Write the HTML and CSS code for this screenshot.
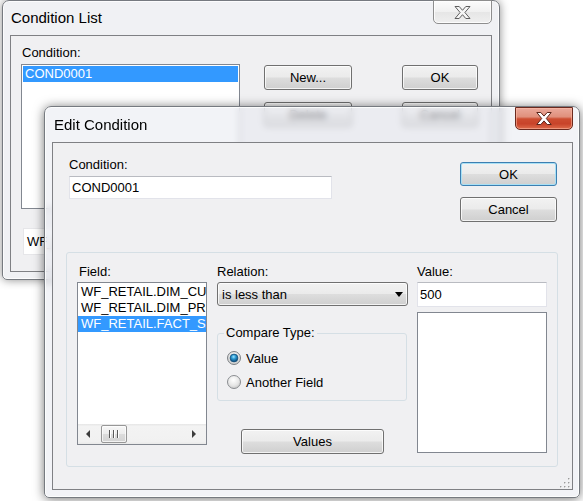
FILE: index.html
```html
<!DOCTYPE html>
<html>
<head>
<meta charset="utf-8">
<title>Edit Condition</title>
<link rel="stylesheet" href="styles.css">
</head>
<body>
<div class="desktop">

  <div class="window back">
    <div class="titlebar">
      <span class="title">Condition List</span>
      <div class="close close-inactive">
        <svg width="17" height="13" viewBox="0 0 17 13"><path d="M1 .5h4.2L8.5 4.3 11.8.5H16l-5.1 6 5.1 6h-4.2l-3.3-3.8-3.3 3.8H1l5.1-6z" fill="#f6f6f6" stroke="#5e5e5e" stroke-linejoin="round"/></svg>
      </div>
    </div>
    <div class="client back-client">
      <div class="back-left">
        <div class="label back-label">Condition:</div>
        <div class="listbox back-list">
          <div class="item selected">COND0001</div>
        </div>
        <div class="textbox back-wf">WF_RETAIL.FACT_SALES</div>
      </div>
      <div class="back-buttons">
        <div class="btn">New...</div>
        <div class="btn">OK</div>
        <div class="btn">Delete</div>
        <div class="btn">Cancel</div>
      </div>
    </div>
  </div>

  <div class="window front">
    <div class="titlebar">
      <span class="title">Edit Condition</span>
      <div class="close close-active">
        <svg width="16" height="13" viewBox="0 0 16 13"><path d="M.8 .5h4l3.2 3.6 3.2-3.6h4l-4.9 6 4.9 6h-4L8 8.9l-3.2 3.6h-4l4.9-6z" fill="#ffffff" stroke="#5a261b" stroke-linejoin="round"/></svg>
      </div>
    </div>
    <div class="client front-client">
      <div class="top-row">
        <div class="cond-col">
          <div class="label">Condition:</div>
          <div class="textbox cond-input">COND0001</div>
        </div>
        <div class="dlg-buttons">
          <div class="btn default ok">OK</div>
          <div class="btn cancel">Cancel</div>
        </div>
      </div>

      <div class="group">
        <div class="col">
          <div class="glabel field-label">Field:</div>
          <div class="listbox field-list">
            <div class="items">
              <div class="item">WF_RETAIL.DIM_CUSTOMER</div>
              <div class="item">WF_RETAIL.DIM_PRODUCT</div>
              <div class="item selected">WF_RETAIL.FACT_SALES</div>
            </div>
            <div class="hscroll">
              <div class="sb-btn sb-left"><span class="tri-left"></span></div>
              <div class="thumb"><span></span><span></span><span></span></div>
              <div class="sb-track"></div>
              <div class="sb-btn sb-right"><span class="tri-right"></span></div>
            </div>
          </div>
        </div>

        <div class="col mid-col">
          <div class="glabel">Relation:</div>
          <div class="combo"><span>is less than</span><span class="tri-down"></span></div>
          <fieldset class="ctype">
            <legend>Compare Type:</legend>
            <div class="radio">
              <svg width="14" height="14" viewBox="0 0 14 14">
                <defs>
                  <radialGradient id="ringOn" cx="50%" cy="35%" r="65%"><stop offset="0" stop-color="#ffffff"/><stop offset="1" stop-color="#c9c9c9"/></radialGradient>
                  <radialGradient id="dotOn" cx="45%" cy="35%" r="60%"><stop offset="0" stop-color="#9fe6ff"/><stop offset="0.45" stop-color="#2b9ad3"/><stop offset="1" stop-color="#0e4f7e"/></radialGradient>
                </defs>
                <circle cx="7" cy="7" r="6.5" fill="url(#ringOn)" stroke="#7d8185"/>
                <circle cx="7" cy="7" r="3.9" fill="url(#dotOn)" stroke="#14507c" stroke-width="0.8"/>
              </svg>
              <span>Value</span>
            </div>
            <div class="radio">
              <svg width="14" height="14" viewBox="0 0 14 14">
                <defs>
                  <radialGradient id="ringOff" cx="45%" cy="35%" r="70%"><stop offset="0" stop-color="#ffffff"/><stop offset="0.6" stop-color="#e6e6e6"/><stop offset="1" stop-color="#c4c4c4"/></radialGradient>
                </defs>
                <circle cx="7" cy="7" r="6.5" fill="url(#ringOff)" stroke="#8a8d91"/>
              </svg>
              <span>Another Field</span>
            </div>
          </fieldset>
          <div class="btn values">Values</div>
        </div>

        <div class="col">
          <div class="glabel">Value:</div>
          <div class="textbox value-input">500</div>
          <div class="listbox value-list"></div>
        </div>
      </div>

      <svg class="grip" width="12" height="12" viewBox="0 0 12 12">
        <g fill="#ffffff"><rect x="11" y="3" width="1" height="1"/><rect x="7" y="7" width="1" height="1"/><rect x="11" y="7" width="1" height="1"/><rect x="3" y="11" width="1" height="1"/><rect x="7" y="11" width="1" height="1"/><rect x="11" y="11" width="1" height="1"/></g>
        <g fill="#9a9a9a"><rect x="10" y="2" width="1.4" height="1.4"/><rect x="6" y="6" width="1.4" height="1.4"/><rect x="10" y="6" width="1.4" height="1.4"/><rect x="2" y="10" width="1.4" height="1.4"/><rect x="6" y="10" width="1.4" height="1.4"/><rect x="10" y="10" width="1.4" height="1.4"/></g>
      </svg>
    </div>
  </div>

</div>
</body>
</html>
```

FILE: styles.css
```css
* { box-sizing: border-box; }

html, body {
  margin: 0;
  padding: 0;
}

body {
  font-family: "Liberation Sans", Arial, sans-serif;
  font-size: 13px;
  color: #000;
  background: #fff;
}

.desktop {
  position: relative;
  width: 583px;
  height: 501px;
  overflow: hidden;
  background: #ffffff;
}

/* ---------- windows ---------- */
.window {
  position: absolute;
  display: flex;
  flex-direction: column;
  border: 1px solid #767a80;
  border-radius: 7px 7px 5px 5px;
  background: rgba(230, 232, 238, 0.62);
  box-shadow: 0 0 10px rgba(0, 0, 0, 0.45), inset 0 0 0 1px rgba(255, 255, 255, 0.8);
}

.back {
  left: 2px;
  top: 0;
  width: 498px;
  height: 280px;
  padding: 0 7px 7px 7px;
  z-index: 1;
}

.front {
  left: 44px;
  top: 106px;
  width: 536px;
  height: 392px;
  padding: 0 6px 7px 7px;
  z-index: 2;
  background: rgba(232, 234, 240, 0.55);
  backdrop-filter: blur(3px);
  box-shadow: 0 1px 11px rgba(0, 0, 0, 0.55), inset 0 0 0 1px rgba(255, 255, 255, 0.8);
}

.titlebar {
  display: flex;
  align-items: flex-start;
  flex: none;
}

.back .titlebar { height: 34px; }
.front .titlebar { height: 35px; }

.title {
  font-size: 15px;
  line-height: 18px;
  white-space: nowrap;
}

.back .title { padding: 8px 0 0 1px; }
.front .title { padding: 9px 0 0 2px; }

.close {
  margin-left: auto;
  display: flex;
  align-items: center;
  justify-content: center;
  border-radius: 0 0 5px 5px;
}

.close-inactive {
  width: 59px;
  height: 24px;
  margin-top: -1px;
  border: 1px solid #8e8e8e;
  background: linear-gradient(#fcfcfc 0%, #f0f0f0 50%, #e6e6e6 52%, #efefef 100%);
  box-shadow: inset 0 0 0 1px rgba(255, 255, 255, 0.8);
}

.close-active {
  width: 58px;
  height: 23px;
  border: 1px solid #6b291e;
  background: linear-gradient(#eaa99b 0%, #e0907c 42%, #cd4d31 52%, #c8432a 75%, #de6c4c 100%);
  box-shadow: inset 0 0 0 1px rgba(255, 190, 170, 0.55);
}

.client {
  flex: 1;
  border: 1px solid #7f8084;
  background: #f0f0f2;
}

/* ---------- shared controls ---------- */
.label {
  line-height: 16px;
  height: 19px;
  white-space: nowrap;
}

.glabel {
  line-height: 16px;
  height: 18px;
  white-space: nowrap;
}

.btn {
  display: flex;
  align-items: center;
  justify-content: center;
  border: 1px solid #707070;
  border-radius: 3px;
  background: linear-gradient(#f2f2f2 0%, #ebebeb 48%, #dddddd 52%, #cfcfcf 100%);
  box-shadow: inset 0 0 0 1px rgba(255, 255, 255, 0.75);
  white-space: nowrap;
}

.btn.default {
  border-color: #3c7fb1;
  box-shadow: inset 0 0 0 1px #a8e0f5;
}

.textbox {
  display: flex;
  align-items: center;
  background: #ffffff;
  border: 1px solid #e2e3ea;
  border-top-color: #b9bbc1;
  padding-left: 2px;
  white-space: nowrap;
  overflow: hidden;
}

.listbox {
  background: #ffffff;
  border: 1px solid #828790;
  padding: 1px;
  overflow: hidden;
}

.item {
  height: 16px;
  line-height: 16px;
  padding-left: 2px;
  white-space: nowrap;
}

.item.selected {
  background: #3399ff;
  color: #ffffff;
}

/* ---------- back window content ---------- */
.back-client {
  display: flex;
  padding: 9px 0 0 10px;
}

.back-left {
  display: flex;
  flex-direction: column;
}

.back-label { padding-left: 1px; }

.back-list {
  width: 219px;
  height: 145px;
}

.back-wf {
  width: 217px;
  height: 27px;
  margin: 19px 0 0 2px;
  padding-left: 3px;
  border-color: #e6e6e9;
}

.back-buttons {
  display: grid;
  grid-template-columns: 88px 76px;
  grid-auto-rows: 25px;
  column-gap: 50px;
  row-gap: 12px;
  margin: 20px 0 0 24px;
  align-content: start;
}

/* ---------- front window content ---------- */
.front-client {
  position: relative;
  padding: 14px 14px 0 13px;
}

.top-row {
  display: flex;
  justify-content: space-between;
  align-items: flex-start;
}

.cond-col {
  display: flex;
  flex-direction: column;
  padding-left: 3px;
}

.cond-input {
  width: 263px;
  height: 23px;
}

.dlg-buttons {
  display: flex;
  flex-direction: column;
  width: 97px;
  margin-right: 1px;
}

.ok {
  height: 24px;
  margin-top: 5px;
}

.cancel {
  height: 25px;
  margin-top: 11px;
}

.group {
  margin-top: 30px;
  height: 215px;
  border: 1px solid #d5dfe5;
  border-radius: 3px;
  padding: 11px 10px 0 10px;
  display: grid;
  grid-template-columns: 130px 192px 130px;
  column-gap: 9px;
  align-items: start;
}

.col {
  display: flex;
  flex-direction: column;
}

.mid-col { padding-left: 1px; }

.field-label { padding-left: 2px; }

.field-list {
  height: 163px;
  display: flex;
  flex-direction: column;
  padding: 0;
}

.items {
  flex: 1;
  overflow: hidden;
  padding-top: 1px;
}

.field-list .item { padding-left: 3px; }

.hscroll {
  flex: none;
  height: 20px;
  display: flex;
  background: linear-gradient(#e6e6e6 0%, #f3f3f3 12%, #f1f1f1 88%, #e9e9e9 100%);
}

.sb-btn {
  width: 17px;
  flex: none;
  display: flex;
  align-items: center;
}

.sb-left { padding-left: 8px; }
.sb-right { padding-left: 3px; }

.tri-left {
  width: 0;
  height: 0;
  border-top: 4px solid transparent;
  border-bottom: 4px solid transparent;
  border-right: 4px solid #3c3c3c;
}

.tri-right {
  width: 0;
  height: 0;
  border-top: 4px solid transparent;
  border-bottom: 4px solid transparent;
  border-left: 4px solid #3c3c3c;
}

.thumb {
  width: 26px;
  margin: 1px 0 1px 6px;
  border: 1px solid #979797;
  border-radius: 2px;
  background: linear-gradient(#f7f7f7 0%, #ececec 50%, #dcdcdc 52%, #d3d3d3 100%);
  box-shadow: inset 0 0 0 1px rgba(255, 255, 255, 0.7);
  display: flex;
  align-items: center;
  justify-content: center;
  gap: 2px;
}

.thumb span {
  width: 2px;
  height: 8px;
  border-left: 1px solid #5a5a5a;
  border-right: 1px solid #ffffff;
}

.sb-track { flex: 1; }

.combo {
  height: 24px;
  display: flex;
  align-items: center;
  padding: 0 4px 0 4px;
  border: 1px solid #707070;
  border-radius: 3px;
  background: linear-gradient(#f2f2f2 0%, #ebebeb 48%, #dddddd 52%, #cfcfcf 100%);
  box-shadow: inset 0 0 0 1px rgba(255, 255, 255, 0.75);
  white-space: nowrap;
}

.tri-down {
  margin-left: auto;
  width: 0;
  height: 0;
  border-left: 4px solid transparent;
  border-right: 4px solid transparent;
  border-top: 5px solid #000;
}

.ctype {
  margin: 19px 1px 0 0;
  padding: 9px 6px 10px 6px;
  border: 1px solid #d5dfe5;
  border-radius: 3px;
  min-width: 0;
}

.ctype legend {
  padding: 0 2px;
  line-height: 16px;
}

.radio {
  display: flex;
  align-items: center;
  height: 16px;
  gap: 5px;
  padding-left: 3px;
  white-space: nowrap;
}

.radio + .radio { margin-top: 8px; }

.values {
  width: 143px;
  height: 25px;
  margin-top: 28px;
  align-self: center;
}

.value-input {
  height: 25px;
}

.value-list {
  height: 141px;
  margin-top: 5px;
}

.grip {
  position: absolute;
  right: 2px;
  bottom: 1px;
}
```
